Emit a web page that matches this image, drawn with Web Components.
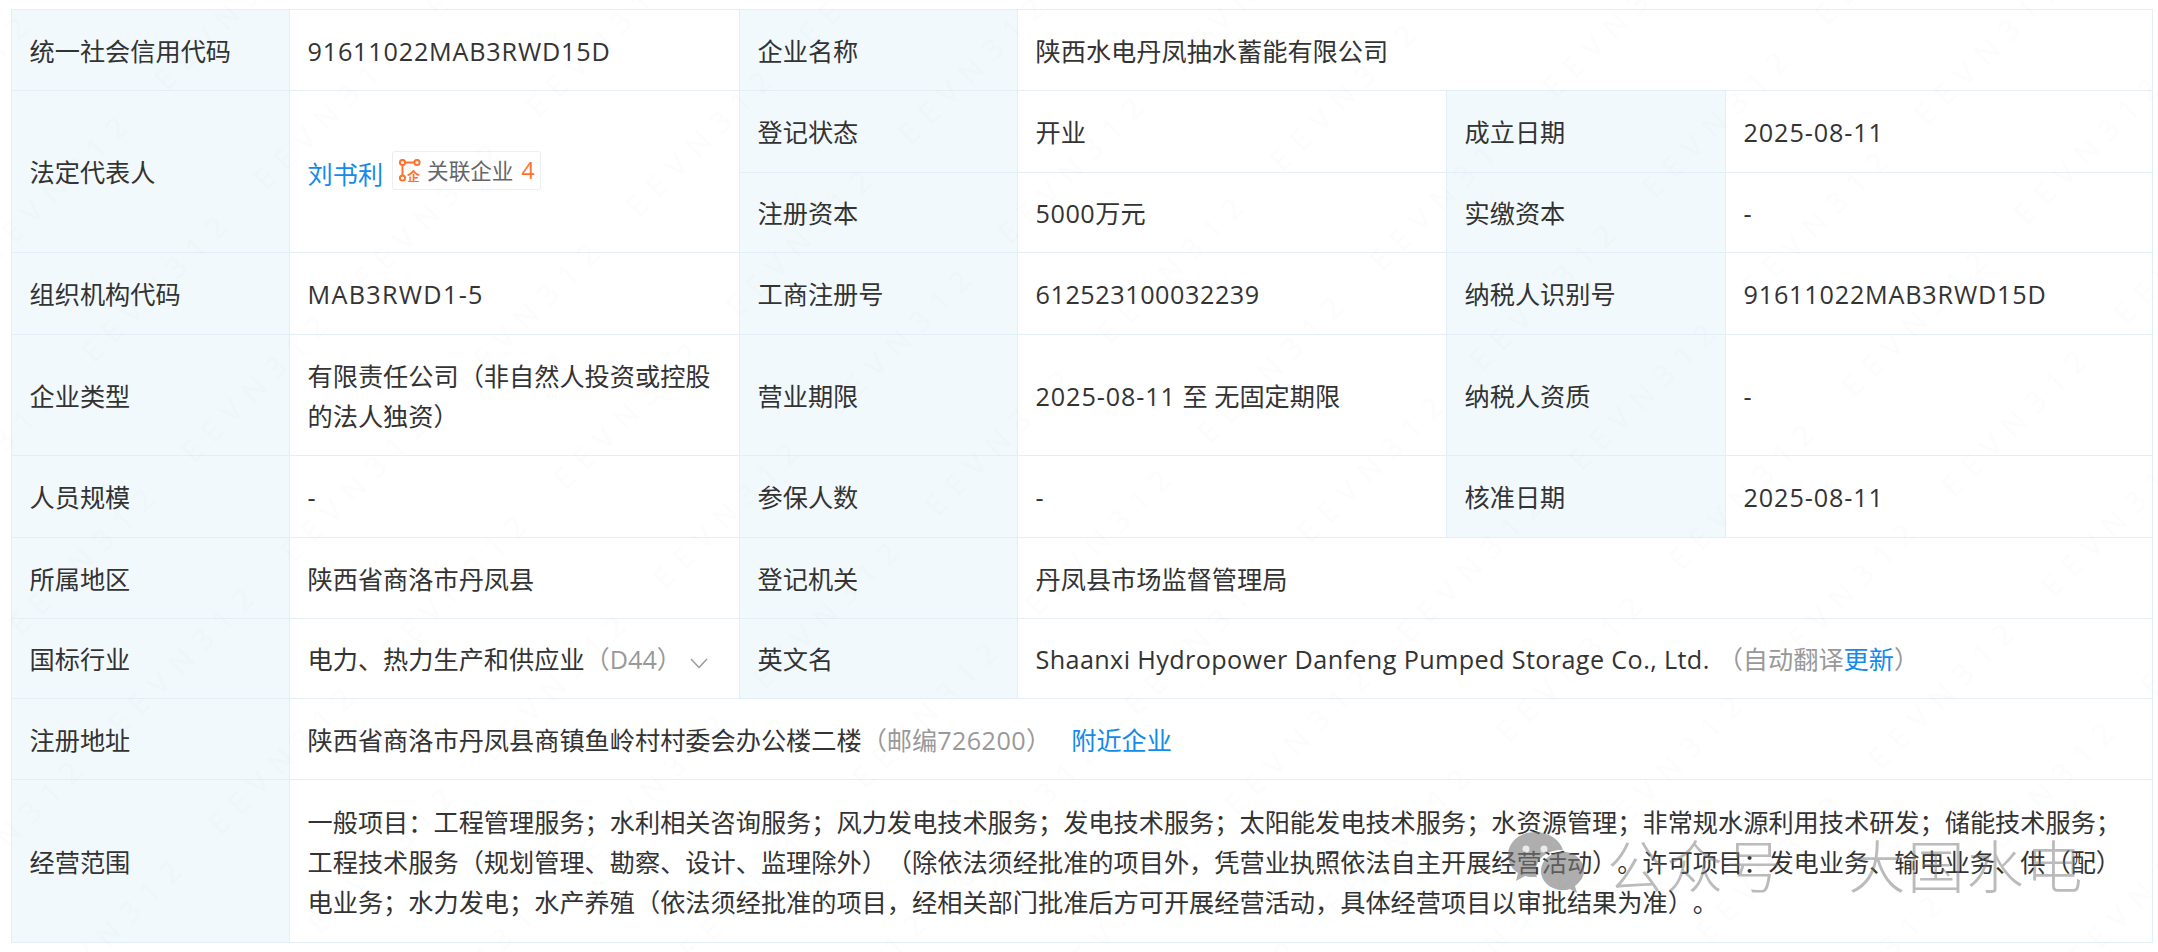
<!DOCTYPE html>
<html lang="zh">
<head>
<meta charset="utf-8">
<style>
  html, body { margin: 0; background: #fff; }
  body { padding: 9px 0 0 11px; overflow: hidden; height: 952px; box-sizing: border-box; position: relative;
    font-family: "Open Sans", "Noto Sans CJK SC", sans-serif; font-size: 25.2px; color: #333; text-spacing-trim: space-all; }
</style>
</head>
<body>
<info-table>
  <info-cell label>统一社会信用代码</info-cell>
  <info-cell><num-text style="--ls:.8px">91611022MAB3RWD15D</num-text></info-cell>
  <info-cell label>企业名称</info-cell>
  <info-cell span="3">陕西水电丹凤抽水蓄能有限公司</info-cell>

  <info-cell label rows="2">法定代表人</info-cell>
  <info-cell rows="2"><blue-link>刘书利</blue-link><related-tag count="4"></related-tag></info-cell>
  <info-cell label>登记状态</info-cell>
  <info-cell>开业</info-cell>
  <info-cell label>成立日期</info-cell>
  <info-cell><num-text>2025-08-11</num-text></info-cell>

  <info-cell label>注册资本</info-cell>
  <info-cell><num-text style="--ls:.55px">5000</num-text>万元</info-cell>
  <info-cell label>实缴资本</info-cell>
  <info-cell>-</info-cell>

  <info-cell label>组织机构代码</info-cell>
  <info-cell><num-text style="--ls:1.3px">MAB3RWD1-5</num-text></info-cell>
  <info-cell label>工商注册号</info-cell>
  <info-cell><num-text style="--ls:.55px">612523100032239</num-text></info-cell>
  <info-cell label>纳税人识别号</info-cell>
  <info-cell><num-text style="--ls:.8px">91611022MAB3RWD15D</num-text></info-cell>

  <info-cell label>企业类型</info-cell>
  <info-cell>有限责任公司（非自然人投资或控股的法人独资）</info-cell>
  <info-cell label>营业期限</info-cell>
  <info-cell><num-text>2025-08-11</num-text> 至 无固定期限</info-cell>
  <info-cell label>纳税人资质</info-cell>
  <info-cell>-</info-cell>

  <info-cell label>人员规模</info-cell>
  <info-cell>-</info-cell>
  <info-cell label>参保人数</info-cell>
  <info-cell>-</info-cell>
  <info-cell label>核准日期</info-cell>
  <info-cell><num-text>2025-08-11</num-text></info-cell>

  <info-cell label>所属地区</info-cell>
  <info-cell>陕西省商洛市丹凤县</info-cell>
  <info-cell label>登记机关</info-cell>
  <info-cell span="3">丹凤县市场监督管理局</info-cell>

  <info-cell label>国标行业</info-cell>
  <info-cell>电力、热力生产和供应业<grey-note>（D44）</grey-note><svg width="18" height="11" viewBox="0 0 18 11" style="margin-left:8px" fill="none" stroke="#999" stroke-width="1.5"><path d="M1 1l8 8.500 8-8.500"/></svg></info-cell>
  <info-cell label>英文名</info-cell>
  <info-cell span="3"><num-text style="--ls:.38px">Shaanxi Hydropower Danfeng Pumped Storage Co., Ltd.</num-text><grey-note gap>（自动翻译</grey-note><blue-link>更新</blue-link><grey-note>）</grey-note></info-cell>

  <info-cell label>注册地址</info-cell>
  <info-cell span="5">陕西省商洛市丹凤县商镇鱼岭村村委会办公楼二楼<grey-note>（邮编<num-text style="--ls:.4px">726200</num-text>）</grey-note><blue-link gap>附近企业</blue-link></info-cell>

  <info-cell label>经营范围</info-cell>
  <info-cell span="5" wide>一般项目：工程管理服务；水利相关咨询服务；风力发电技术服务；发电技术服务；太阳能发电技术服务；水资源管理；非常规水源利用技术研发；储能技术服务；工程技术服务（规划管理、勘察、设计、监理除外）（除依法须经批准的项目外，凭营业执照依法自主开展经营活动）。许可项目：发电业务、输电业务、供（配）电业务；水力发电；水产养殖（依法须经批准的项目，经相关部门批准后方可开展经营活动，具体经营项目以审批结果为准）。</info-cell>
</info-table>
<wechat-mark>公众号 大国水电</wechat-mark>
<tile-mark></tile-mark>

<script>
class InfoTable extends HTMLElement {
  constructor() {
    super();
    this.attachShadow({ mode: 'open' }).innerHTML = `
      <style>
        :host {
          display: grid;
          grid-template-columns: 278px 450px 278px 429px 279px 427px;
          grid-template-rows: 81px 82px 80px 82px 121px 82px 81px 80px 81px 163px;
          border-top: 1px solid #e4eef6;
          border-left: 1px solid #e4eef6;
          width: max-content;
        }
      </style>
      <slot></slot>`;
  }
}

class InfoCell extends HTMLElement {
  constructor() {
    super();
    this.attachShadow({ mode: 'open' }).innerHTML = `
      <style>
        :host {
          display: flex;
          align-items: center;
          box-sizing: border-box;
          padding: 1px 19px 0 17.5px;
          border-right: 1px solid #e4eef6;
          border-bottom: 1px solid #e4eef6;
          line-height: 40px;
          color: #333;
          min-width: 0;
        }
        :host([label]) { background: #f2f9fc; }
        :host([wide]) { padding-right: 30px; }
        .in { display: block; min-width: 0; }
      </style>
      <span class="in"><slot></slot></span>`;
  }
  connectedCallback() {
    const span = this.getAttribute('span');
    const rows = this.getAttribute('rows');
    if (span) this.style.gridColumn = 'span ' + span;
    if (rows) this.style.gridRow = 'span ' + rows;
  }
}

// inline hosts below: no whitespace in the shadow markup or it shows up as a gap in the text
class NumText extends HTMLElement {
  constructor() {
    super();
    this.attachShadow({ mode: 'open' }).innerHTML =
      `<style>:host { letter-spacing: var(--ls, .9px); }</style><slot></slot>`;
  }
}

class BlueLink extends HTMLElement {
  constructor() {
    super();
    this.attachShadow({ mode: 'open' }).innerHTML =
      `<style>:host { color: #128bed; } :host([gap]) { margin-left: 20px; }</style><slot></slot>`;
  }
}

class GreyNote extends HTMLElement {
  constructor() {
    super();
    this.attachShadow({ mode: 'open' }).innerHTML =
      `<style>:host { color: #999; } :host([gap]) { margin-left: 8px; }</style><slot></slot>`;
  }
}

class RelatedTag extends HTMLElement {
  constructor() {
    super();
    this.attachShadow({ mode: 'open' }).innerHTML = `
      <style>
        :host {
          display: inline-flex;
          align-items: center;
          gap: 6px;
          height: 39px;
          box-sizing: border-box;
          margin-left: 9px;
          padding: 0 5px 0 6px;
          border: 1px solid #eee;
          border-radius: 3px;
          font-size: 21.6px;
          color: #666;
          vertical-align: 2px;
          line-height: 1;
        }
        b { font-weight: 400; color: #ff722d; font-size: 23px; margin-left: 2px; }
        svg { display: block; }
      </style>
      <svg width="22" height="23" viewBox="0 0 22 23" fill="none" stroke="#ff722d" stroke-width="2">
        <circle cx="3.500" cy="3.500" r="2.600"/><circle cx="18" cy="3.500" r="2.600"/><circle cx="3.500" cy="19" r="2.600"/>
        <path d="M6.500 3.500h8.500M3.500 6.500v9.500"/>
        <text x="8" y="22" font-size="13" font-weight="700" fill="#ff722d" stroke="none" font-family="Noto Sans CJK SC">企</text>
      </svg>
      <span>关联企业<b> ${this.getAttribute('count') || ''}</b></span>`;
  }
}

class WechatMark extends HTMLElement {
  constructor() {
    super();
    this.attachShadow({ mode: 'open' }).innerHTML = `
      <style>
        :host {
          position: absolute;
          left: 1507px;
          top: 832px;
          display: flex;
          align-items: center;
          gap: 22px;
          color: rgba(120,120,120,.5);
          font-size: 57px;
          line-height: 62px;
          letter-spacing: 2px;
          word-spacing: 50px;
          white-space: pre;
          pointer-events: none;
          font-family: "Noto Sans CJK SC", sans-serif;
          font-weight: 300;
        }
      </style>
      <svg width="78" height="62" viewBox="0 0 78 62">
        <path fill="rgba(120,120,120,.6)" d="M28 0C13 0 1 10 1 23c0 8 4 14 10 18l-2 8 9-5c3 1 6 1 9 1h3c-1-2-1-4-1-6 0-12 11-21 25-21h2C53 8 42 0 28 0z"/>
        <path fill="rgba(120,120,120,.6)" d="M56 20c-12 0-22 8-22 19s10 19 22 19c3 0 5 0 7-1l7 4-2-7c5-4 9-9 9-15 0-11-9-19-21-19z"/>
        <circle cx="19" cy="17" r="3.500" fill="#fff" fill-opacity=".75"/><circle cx="37" cy="17" r="3.500" fill="#fff" fill-opacity=".75"/>
      </svg>
      <slot></slot>`;
  }
}

// the faint diagonal site watermark that lies over the whole table
class TileMark extends HTMLElement {
  constructor() {
    super();
    this.attachShadow({ mode: 'open' }).innerHTML = `
      <style>
        :host { position: absolute; left: 0; top: 0; width: 2158px; height: 952px; pointer-events: none; }
        svg { display: block; }
      </style>
      <svg width="2158" height="952" aria-hidden="true">
        <defs>
          <pattern id="p" width="244" height="141" patternUnits="userSpaceOnUse" patternTransform="translate(1907 107) rotate(-45)">
            <text x="0" y="28" font-family="Open Sans" font-size="30" letter-spacing="11" fill="#000" fill-opacity=".012">EEVN312</text>
          </pattern>
        </defs>
        <rect width="2158" height="952" fill="url(#p)"/>
      </svg>`;
  }
}

customElements.define('info-table', InfoTable);
customElements.define('info-cell', InfoCell);
customElements.define('num-text', NumText);
customElements.define('blue-link', BlueLink);
customElements.define('grey-note', GreyNote);
customElements.define('related-tag', RelatedTag);
customElements.define('wechat-mark', WechatMark);
customElements.define('tile-mark', TileMark);
</script>
</body>
</html>
